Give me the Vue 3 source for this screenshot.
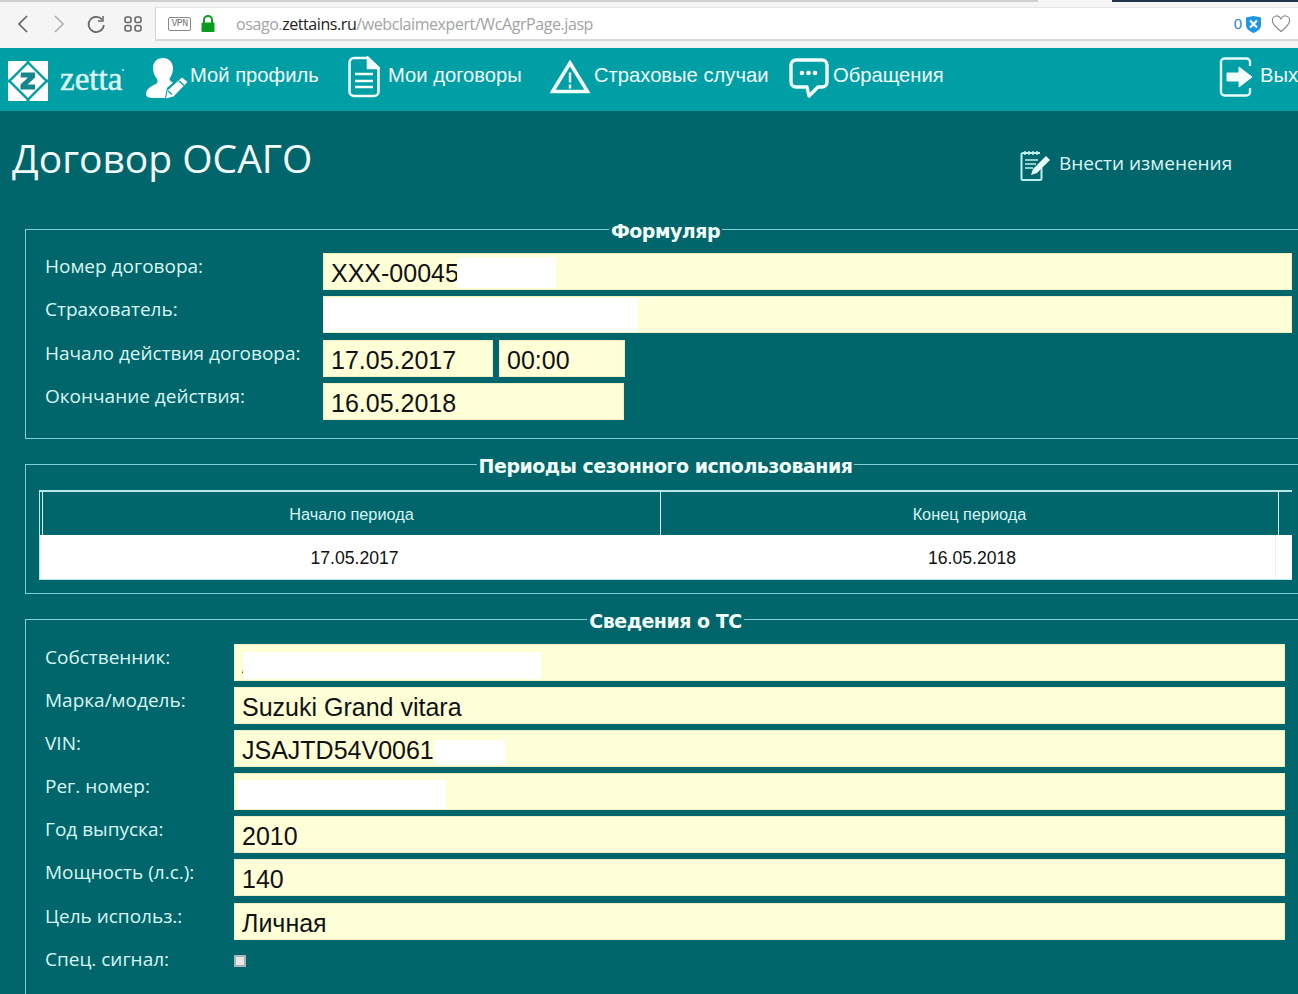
<script setup>
const form1 = [
  { label: 'Номер договора:', fields: [{ text: 'XXX-00045', cls: 'grow' }], mask: 'mask-a' },
  { label: 'Страхователь:', fields: [{ text: '', cls: 'grow' }], mask: 'mask-b' },
  { label: 'Начало действия договора:', fields: [{ text: '17.05.2017', cls: 'date' }, { text: '00:00', cls: 'time' }] },
  { label: 'Окончание действия:', fields: [{ text: '16.05.2018', cls: 'end' }] },
]
const form3 = [
  { label: 'Собственник:', text: 'А', mask: 'mask-c' },
  { label: 'Марка/модель:', text: 'Suzuki Grand vitara' },
  { label: 'VIN:', text: 'JSAJTD54V0061', mask: 'mask-d' },
  { label: 'Рег. номер:', text: '', mask: 'mask-e' },
  { label: 'Год выпуска:', text: '2010' },
  { label: 'Мощность (л.с.):', text: '140' },
  { label: 'Цель использ.:', text: 'Личная' },
]
</script>

<template>
  <div class="page">
    <div class="chrome">
      <div class="tabstrip">
        <span class="tab-light"></span>
        <span class="tab-dark"></span>
      </div>
      <div class="toolbar">
        <svg class="tool" width="16" height="22" viewBox="0 0 16 22"><path d="M12 3 4 11l8 8" fill="none" stroke="#666" stroke-width="1.700"/></svg>
        <svg class="tool next" width="16" height="22" viewBox="0 0 16 22"><path d="m4 3 8 8-8 8" fill="none" stroke="#b0b0b0" stroke-width="1.700"/></svg>
        <svg class="tool reload" width="20" height="20" viewBox="0 0 20 20"><path d="M16 5.500A7.600 7.600 0 1 0 17.800 11" fill="none" stroke="#666" stroke-width="1.700"/><path d="M17 2v5h-5" fill="none" stroke="#666" stroke-width="1.500"/></svg>
        <svg class="tool grid" width="18" height="16" viewBox="0 0 18 16"><g fill="none" stroke="#666" stroke-width="1.600"><rect x="1" y="1" width="6" height="5.500" rx="2"/><rect x="11" y="1" width="6" height="5.500" rx="2"/><rect x="1" y="9.500" width="6" height="5.500" rx="2"/><rect x="11" y="9.500" width="6" height="5.500" rx="2"/></g></svg>
        <div class="address">
          <span class="vpn">VPN</span>
          <svg class="lock" width="16" height="18" viewBox="0 0 16 18"><path d="M4 8V5a4 4 0 0 1 8 0v3" fill="none" stroke="#0a9c1e" stroke-width="2"/><rect x="1.500" y="7.500" width="13" height="9.500" rx="1" fill="#0a9c1e"/></svg>
          <span class="url"><span class="dim">osago.</span>zettains.ru<span class="dim">/webclaimexpert/WcAgrPage.jasp</span></span>
          <span class="count">0</span>
          <svg width="17" height="18" viewBox="0 0 17 18"><path d="M1 2.500 8.500 1 16 2.500V10c0 4-4 6.500-7.500 8C5 16.500 1 14 1 10Z" fill="#1e96e8"/><path d="m5 5.500 7 7m0-7-7 7" stroke="#fff" stroke-width="2.200"/></svg>
          <svg class="heart" width="20" height="18" viewBox="0 0 20 18"><path d="M10 16.500C5 12.500 1.500 9.500 1.500 6A4.300 4.300 0 0 1 10 4.500 4.300 4.300 0 0 1 18.500 6c0 3.500-3.500 6.500-8.500 10.500Z" fill="none" stroke="#888" stroke-width="1.200"/></svg>
        </div>
      </div>
    </div>

    <nav class="nav">
      <svg class="logo" width="40" height="40" viewBox="0 0 40 40">
        <rect width="40" height="40" fill="#fff"/>
        <path d="M20 1.500 38.500 20 20 38.500 1.500 20Z" fill="#fff" stroke="#009ea5" stroke-width="2.400"/>
        <path d="M20 0v3M20 37v3M0 20h3M37 20h3" stroke="#009ea5" stroke-width="3"/>
        <path d="M13 11.500h14v5l-7.500 7h7.500v5h-14.500v-5l7.500-7h-7.500Z" fill="#14868c"/>
      </svg>
      <span class="brand">zetta<i class="tm"></i></span>

      <svg class="ic-profile" width="42" height="42" viewBox="0 0 42 42" fill="#fff">
        <path d="M17 1c6 0 10 4.500 10 10.500 0 4-1.500 7.500-3.500 10 0 2 1.500 3 3.500 4L21 31l-2 10H7c-4 0-7-1-7-4 0-5 5-8 10-10 1.500-1 2-3 1-5-2-2.500-4-6-4-11C7 5 11 1 17 1Z"/>
        <path d="m36 20.500 5.500 4.500-14 14.500-7.500 2 1.500-8Z"/>
        <path d="m33 24 5 4.500M22 34l4 3.500" stroke="#009ea5" stroke-width="1.300"/>
      </svg>
      <a class="item t-profile">Мой профиль</a>

      <svg class="ic-doc" width="32" height="42" viewBox="0 0 32 42" fill="none" stroke="#f2fdfc" stroke-width="2.600">
        <path d="M20 2H6A4.500 4.500 0 0 0 1.500 6.500v29A4.500 4.500 0 0 0 6 40h20a4.500 4.500 0 0 0 4.500-4.500V12Z"/>
        <path d="M20 2v10h10.500Z" fill="#f2fdfc"/>
        <path d="M7 18h18M7 25h18M7 31h18" stroke-width="2.600"/>
      </svg>
      <a class="item t-doc">Мои договоры</a>

      <svg class="ic-warn" width="40" height="36" viewBox="0 0 40 36" fill="none" stroke="#f2fdfc">
        <path d="M20 3 37.500 31.500H2.500Z" stroke-width="3.600"/>
        <path d="M20 12.500v10M20 24.500v4" stroke-width="2.400"/>
      </svg>
      <a class="item t-warn">Страховые случаи</a>

      <svg class="ic-chat" width="40" height="41" viewBox="0 0 40 41" fill="none">
        <path d="M7 2h26a5 5 0 0 1 5 5v17a5 5 0 0 1-5 5h-4L20 38l-2-9H7a5 5 0 0 1-5-5V7a5 5 0 0 1 5-5Z" stroke="#f2fdfc" stroke-width="3.400" stroke-linejoin="round"/>
        <circle cx="13" cy="15" r="2.300" fill="#fff"/><circle cx="19.500" cy="15" r="2.300" fill="#fff"/><circle cx="26" cy="15" r="2.300" fill="#fff"/>
      </svg>
      <a class="item t-chat">Обращения</a>

      <svg class="ic-exit" width="33" height="40" viewBox="0 0 33 40" fill="none">
        <path d="M31 9V5a3.500 3.500 0 0 0-3.500-3.500h-22A3.500 3.500 0 0 0 2 5v30a3.500 3.500 0 0 0 3.500 3.500h22A3.500 3.500 0 0 0 31 35v-4" stroke="#eafafa" stroke-width="2.400"/>
        <path d="M8 16h12v-6l13 10-13 10v-6H8Z" fill="#f2fdfc" stroke="#f2fdfc" stroke-linejoin="round"/>
      </svg>
      <a class="item t-exit">Выход</a>
    </nav>

    <main class="content">
      <header class="head">
        <h1>Договор ОСАГО</h1>
        <div class="change">
          <svg width="31" height="31" viewBox="0 0 31 31" fill="none" stroke="#bdeeee">
            <path d="M20 3H3a1.500 1.500 0 0 0-1.500 1.500v24A1.500 1.500 0 0 0 3 30h17a1.500 1.500 0 0 0 1.500-1.500V18" stroke-width="2"/>
            <path d="M5 1v4M9 1v4M13 1v4M17 1v4" stroke-width="1.500"/>
            <path d="M5 10h13M5 14h11M5 18h8" stroke-width="1.500"/>
            <path d="m26 6 4 4-13 13-6 2 2-6Z" fill="#e6fbfa" stroke="none"/>
          </svg>
          <span>Внести изменения</span>
        </div>
      </header>

      <fieldset class="box one">
        <legend>Формуляр</legend>
        <div class="rows rows1">
          <div v-for="row in form1" :key="row.label" class="row r1">
            <label>{{ row.label }}</label>
            <div class="fields">
              <div v-for="(f, i) in row.fields" :key="i" class="field" :class="f.cls">{{ f.text }}</div>
              <span v-if="row.mask" class="mask" :class="row.mask"></span>
            </div>
          </div>
        </div>
      </fieldset>

      <fieldset class="box two">
        <legend>Периоды сезонного использования</legend>
        <div class="table">
          <div class="thead">
            <div class="th">Начало периода</div>
            <div class="th">Конец периода</div>
          </div>
          <div class="tbody">
            <div class="td a">17.05.2017</div>
            <div class="td b">16.05.2018</div>
          </div>
        </div>
      </fieldset>

      <fieldset class="box three">
        <legend>Сведения о ТС</legend>
        <div class="rows">
          <div v-for="row in form3" :key="row.label" class="row r3">
            <label>{{ row.label }}</label>
            <div class="fields">
              <div class="field grow">{{ row.text }}</div>
              <span v-if="row.mask" class="mask" :class="row.mask"></span>
            </div>
          </div>
          <div class="row r3 check">
            <label>Спец. сигнал:</label>
            <span class="checkbox"></span>
          </div>
          <div class="row r3">
            <label>Прицеп:</label>
          </div>
        </div>
      </fieldset>
    </main>
  </div>
</template>

<style>
html, body { overflow: hidden; background: #00666b; }
</style>

<style scoped>
.page { width: 1332px; height: 994px; overflow: hidden; background: #00666b; font-family: "Liberation Sans", sans-serif; }

.chrome { height: 48px; background: #f5f5f5; box-sizing: border-box; }
.tabstrip { height: 7px; display: flex; justify-content: flex-end; border-top: 2px solid #cfcfcf; box-sizing: border-box; position: relative; width: 1298px; }
.tab-light { position: absolute; left: 1038px; top: -2px; width: 74px; height: 2px; background: #f6f6f6; }
.tab-dark { position: absolute; left: 1112px; top: -2px; width: 186px; height: 2px; background: #24344a; }
.toolbar { display: flex; align-items: center; height: 34px; width: 1298px; padding-left: 15px; box-sizing: border-box; }
.tool { flex: none; }
.next { margin-left: 20px; }
.reload { margin-left: 19px; }
.grid { margin-left: 18px; }
.address { margin-left: 13px; flex: 1; height: 34px; background: #fff; border-left: 1px solid #d4d4d4; border-top: 1px solid #e4e4e4; border-bottom: 2px solid #d9d9d9; box-sizing: border-box; display: flex; align-items: center; padding-left: 12px; padding-right: 7px; }
.vpn { width: 21px; height: 12px; border: 1px solid #888; border-radius: 2px; font: 10px/12px "Liberation Mono", monospace; color: #777; text-align: center; letter-spacing: -.6px; }
.lock { margin-left: 9px; }
.url { margin-left: 20px; margin-top: 1px; flex: 1; font: 16px "Open Sans", sans-serif; color: #222; letter-spacing: -.42px; }
.dim { color: #a3a3a3; }
.count { font: 15px "Liberation Sans", sans-serif; color: #2a83c8; margin-right: 3px; }
.heart { margin-left: 9px; }

.nav { height: 63px; background: #009ea5; display: flex; align-items: center; position: relative; color: #fff; }
.logo { margin-left: 8px; margin-top: 3px; flex: none; }
.brand { margin-left: 12px; width: 86px; font: 400 33px "Liberation Serif", serif; -webkit-text-stroke: .5px #dcf6f5; color: #dcf6f5; flex: none; position: relative; }
.tm { position: absolute; left: 62px; top: 8px; width: 2px; height: 2px; border-radius: 50%; background: #bfecec; }
.item { font-size: 20.200px; white-space: nowrap; flex: none; margin-top: -9px; color: #f0fdfc; }
.ic-profile { flex: none; margin-top: -4px; }
.t-profile { margin-left: 2px; width: 129px; }
.ic-doc { flex: none; margin-left: 29px; margin-top: -5px; }
.t-doc { margin-left: 8px; width: 134px; }
.ic-warn { flex: none; margin-left: 28px; margin-top: -3px; }
.t-warn { margin-left: 4px; width: 174px; }
.ic-chat { flex: none; margin-left: 21px; margin-top: -3px; }
.t-chat { margin-left: 4px; width: 111px; }
.ic-exit { flex: none; margin-left: 275px; margin-top: -5px; }
.t-exit { margin-left: 8px; }

.content { padding-left: 25px; }
.head { height: 92px; position: relative; }
h1 { position: absolute; left: -13px; top: 24px; margin: 0; font: 400 39px/46px "Open Sans", sans-serif; color: #f2fbfb; white-space: nowrap; }
.change { position: absolute; left: 995px; top: 39px; display: flex; align-items: flex-start; gap: 8px; font: 19px/26px "Open Sans", sans-serif; color: #dcf7f5; white-space: nowrap; }

.box { width: 1281px; margin: 0; box-sizing: border-box; border: 1px solid #7fd0d2; padding: 0; min-width: 0; display: block; }
legend { margin: 0 auto; padding: 3px 2px 0; font: bold 19px/24px "DejaVu Sans", sans-serif; color: #f2fdfc; letter-spacing: -.5px; }
.one { height: 223.500px; padding-top: 10.300px; margin-top: 12.500px; }
.two { height: 143.500px; margin-top: 11.500px; padding: 12px 0 0 0; }
.three { margin-top: 11.500px; height: 400px; padding-top: 11px; }

.rows { display: flex; flex-direction: column; gap: 6.200px; padding-left: 19px; }
.rows1 { gap: 6.500px; }
.row { display: flex; height: 37px; flex: none; }
label { font: 19px/27px "Open Sans", sans-serif; color: #d9f6f4; white-space: nowrap; flex: none; }
.r1 label { width: 278px; }
.r3 label { width: 189px; }
.fields { display: flex; gap: 6px; position: relative; }
.r1 .fields { width: 969px; }
.r3 .fields { width: 1051px; }
.field { height: 37px; background: #fefed7; border: 1px solid #eef0c4; box-sizing: border-box; padding-left: 7px; font: 25px/39px "Liberation Sans", sans-serif; color: #111; white-space: nowrap; }
.grow { flex: 1; }
.date { width: 170px; }
.time { width: 126px; }
.end { width: 301px; }
.mask { position: absolute; background: #fff; display: block; }
.mask-a { left: 134px; top: 4px; width: 99px; height: 31px; }
.mask-b { left: 0; top: 2px; width: 315px; height: 34px; }
.mask-c { left: 9px; top: 8px; width: 298px; height: 27px; }
.mask-d { left: 201px; top: 10px; width: 70px; height: 25px; }
.mask-e { left: 4px; top: 7px; width: 208px; height: 29px; }

.table { width: 1253px; margin-left: 13px; }
.thead { height: 45px; display: flex; border-top: 2px solid #b4e8ea; border-left: 1px solid #b4e8ea; box-sizing: border-box; padding-left: 2px; }
.th { width: 617px; border-left: 1px solid #d3f2f1; border-right: 1px solid #d3f2f1; margin-right: -1px; font-size: 16.300px; line-height: 45px; text-align: center; color: #d6f5f3; }
.tbody { height: 45px; background: #fff; display: flex; box-sizing: border-box; border-left: 1px solid #b4e8ea; border-bottom: 1px solid #b4e8ea; }
.td { font-size: 17.600px; line-height: 46px; text-align: center; color: #111; height: 44px; }
.a { width: 629px; }
.b { width: 606px; border-right: 1px solid #eee; }

.check { align-items: flex-start; }
.checkbox { width: 12px; height: 12px; margin-top: 9px; box-sizing: border-box; background: #e7e7e7; border: 2px solid #a9b6b8; }
</style>
